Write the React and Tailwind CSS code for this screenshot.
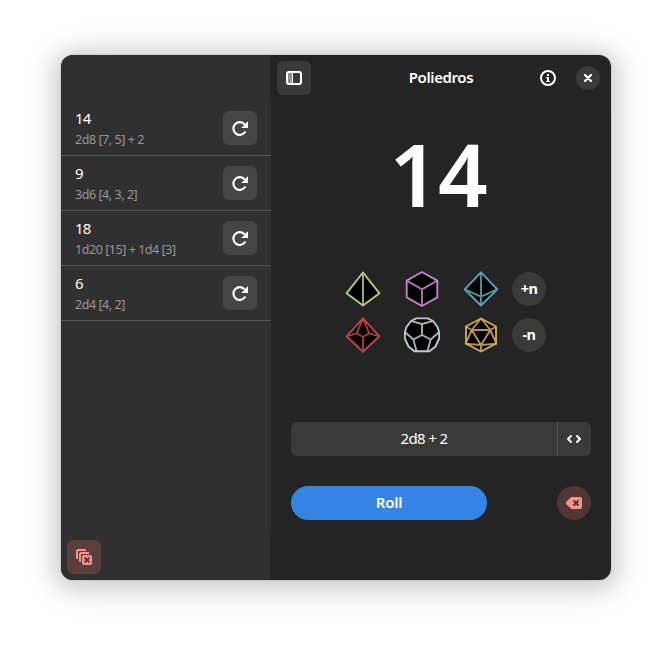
import React from "react";

const history = [
  { total: "14", detail: "2d8 [7, 5] + 2" },
  { total: "9", detail: "3d6 [4, 3, 2]" },
  { total: "18", detail: "1d20 [15] + 1d4 [3]" },
  { total: "6", detail: "2d4 [4, 2]" },
];

function RedoIcon() {
  return (
    <svg width="16" height="16" viewBox="0 0 16 16" fill="none">
      <path d="M13.4 11.6A6.4 6.4 0 1 1 13 4.8" stroke="#fff" strokeWidth="2.1" />
      <path d="M16 1.8V8H9.6V7.2L12 5.8L15 1.8Z" fill="#fff" />
    </svg>
  );
}

function SidebarIcon() {
  return (
    <svg width="16" height="14" viewBox="0 0 16 14" fill="none">
      <rect x="1.5" y="1" width="5" height="12" fill="#8f8f8f" />
      <path d="M6.5 1V13" stroke="#fff" />
      <rect x="1" y="1" width="14" height="12" rx="2" stroke="#fff" strokeWidth="2" />
    </svg>
  );
}

function InfoIcon() {
  return (
    <svg width="16" height="16" viewBox="0 0 16 16" fill="none">
      <circle cx="8" cy="8" r="7" stroke="#fff" strokeWidth="2" />
      <path d="M7 4H9V6H7ZM6 7H9V11H10V12H6V11H7V8H6Z" fill="#fff" />
    </svg>
  );
}

function CloseIcon() {
  return (
    <svg width="16" height="16" viewBox="0 0 16 16" fill="none">
      <path d="M5 5L11 11M11 5L5 11" stroke="#fff" strokeWidth="2.2" strokeLinecap="round" />
    </svg>
  );
}

function CodeIcon() {
  return (
    <svg width="16" height="16" viewBox="0 0 16 16" fill="none" stroke="#fff" strokeWidth="2" strokeLinecap="round" strokeLinejoin="round">
      <path d="M5 5L2 8L5 11M11 5L14 8L11 11" />
    </svg>
  );
}

function BackspaceIcon() {
  return (
    <svg width="16" height="12" viewBox="0 0 16 12">
      <path d="M5.5 0H14A2 2 0 0 1 16 2V10A2 2 0 0 1 14 12H5.5L1 8Q-1 6 1 4Z" fill="#ff938c" />
      <path d="M7.5 3.5L12.5 8.5M12.5 3.5L7.5 8.5" stroke="#503634" strokeWidth="2.1" />
    </svg>
  );
}

function ClearAllIcon() {
  return (
    <svg width="16" height="16" viewBox="0 0 16 16" fill="none" stroke="#ff938c" strokeWidth="2">
      <path d="M1 10V2.5Q1 1 2.5 1H10" />
      <path d="M4 13V5.5Q4 4 5.5 4H13" />
      <rect x="6" y="6" width="10" height="10" rx="2" fill="#ff938c" stroke="none" />
      <path d="M8.5 8.5L13.5 13.5M13.5 8.5L8.5 13.5" stroke="#5a3f3d" strokeWidth="2.1" />
    </svg>
  );
}

const dice = [
  [
    { name: "d4", color: "#b3cc80", outline: "M18 1.5L1.5 22.3L18 34.5L34.5 22.3Z", inner: "M18 1.5V34.5" },
    { name: "d6", color: "#c183c1", outline: "M18 1L33.3 9.7V26.4L18 35L2.7 26.4V9.7Z", inner: "M2.7 9.7L18 18.3L33.3 9.7M18 18.3V35" },
    { name: "d8", color: "#54a8b8", outline: "M18 1.3L34.3 18.3L18 34.5L1.7 18.3Z", inner: "M18 1.3V34.5M1.7 18.3L18 25.7L34.3 18.3" },
  ],
  [
    { name: "d10", color: "#bd4545", outline: "M18 1.3L34.4 19.3L18 34.7L1.6 19.3Z", inner: "M18 1.3L11.7 16.3L18 20L24.3 16.3L18 1.3M1.6 19.3L11.7 16.3M34.4 19.3L24.3 16.3M18 20V34.7" },
    { name: "d12", color: "#b5cdd3", outline: "M12.3 1.4H23.7L29 4L33.5 10L35.1 15V21.5L31.5 29.5L25.5 34.3H10.5L4.5 29.5L.9 21.5V15L2.5 10L7 4Z", inner: "M7.4 4.2L18 7L28.6 4.2M18 7V18L26.7 22.5L23.5 34M18 18L9.3 22.5L12.5 34M9.3 22.5L1.2 15.2M26.7 22.5L34.8 15.2" },
    { name: "d20", color: "#d1a75e", outline: "M18 1.5L33 9.5V26.7L18 34.5L3 26.7V9.5Z", inner: "M8.7 13H27.3L18 28ZM18 1.3L8.7 13L2.7 9.5M18 1.3L27.3 13L33.3 9.5M8.7 13L2.7 26.7L18 28L33.3 26.7L27.3 13M18 28V34.7" },
  ],
];

function Die({ die }) {
  return (
    <svg width="36" height="36" viewBox="0 0 36 36" fill="none" stroke={die.color} strokeWidth="1.9" strokeLinejoin="round">
      <path d={die.outline} fill="#000" />
      <path d={die.inner} strokeOpacity="0.88" />
    </svg>
  );
}

export default function App() {
  return (
    <div className="h-[647px] w-[672px] overflow-hidden bg-white pl-[61px] pt-[55px] font-['Noto_Sans',sans-serif] text-white">
      <div className="flex h-[525px] w-[550px] overflow-hidden rounded-xl bg-[#242424] shadow-[0_3px_20px_8px_rgba(0,0,0,0.13),0_3px_44px_4px_rgba(0,0,0,0.09),0_0_0_1px_rgba(0,0,0,0.07)]">
        <aside className="flex w-[210px] shrink-0 flex-col bg-[#303030]">
          <div className="h-[46px] shrink-0 border-r border-[#252525]" />
          <div className="h-[432px] shrink-0">
            {history.map((item) => (
              <div key={item.total} className="flex h-[55px] items-center justify-between border-b border-[#535353] px-3.5">
                <div className="whitespace-nowrap pt-px">
                  <div className="text-[15px] leading-[20px] tracking-[-0.9px]">{item.total}</div>
                  <div className="pt-[2px] text-[12.5px] leading-[20px] tracking-[-0.45px] text-[#989898]">{item.detail}</div>
                </div>
                <button className="flex size-[34px] items-center justify-center rounded-md bg-[#454545]">
                  <RedoIcon />
                </button>
              </div>
            ))}
          </div>
          <div className="flex flex-1 items-start border-r border-[#252525] pl-1.5 pt-[7px]">
            <button className="flex size-[34px] items-center justify-center rounded-md bg-[#5a3f3d]">
              <ClearAllIcon />
            </button>
          </div>
        </aside>

        <main className="flex w-[340px] flex-col">
          <header className="grid h-[46px] shrink-0 grid-cols-[100px_140px_100px] items-center">
            <button className="ml-1.5 flex size-[34px] items-center justify-center rounded-md bg-[#3a3a3a]">
              <SidebarIcon />
            </button>
            <h1 className="pb-0.5 text-center text-[15px] font-semibold leading-5 tracking-[-0.4px]">Poliedros</h1>
            <div className="flex items-center justify-end gap-5 pr-[11px]">
              <InfoIcon />
              <button className="flex size-6 items-center justify-center rounded-full bg-[#3a3a3a]">
                <CloseIcon />
              </button>
            </div>
          </header>

          <div className="flex h-[170px] shrink-0 items-start justify-center pr-[6px] pt-3 text-[87px] font-semibold leading-[120px] tracking-[-1px]">14</div>

          <div className="ml-[74px] flex flex-col gap-2.5">
            {dice.map((row, i) => (
              <div key={i} className="flex h-9 items-center">
                <div className="flex gap-[23px]">
                  {row.map((die) => (
                    <Die key={die.name} die={die} />
                  ))}
                </div>
                <button className="ml-[13px] flex size-[34px] items-center justify-center rounded-full bg-[#3a3a3a] pb-px text-[14.5px] font-bold tracking-[-0.6px]">
                  {i === 0 ? "+n" : "-n"}
                </button>
              </div>
            ))}
          </div>

          <div className="mx-5 mt-[69px] flex h-[34px] shrink-0 overflow-hidden rounded-md bg-[#3a3a3a]">
            <div className="flex-1 text-center text-[15px] leading-[33px] tracking-[-0.6px]">2d8 + 2</div>
            <button className="flex w-[34px] items-center justify-center border-l border-[#545454] pr-px">
              <CodeIcon />
            </button>
          </div>

          <div className="mx-5 mt-[30px] flex justify-between">
            <button className="flex h-[34px] w-[196px] items-center justify-center rounded-full bg-[#3584e4] pb-px text-[15px] font-semibold leading-[21px] tracking-[-0.2px]">Roll</button>
            <button className="flex size-[34px] items-center justify-center rounded-full bg-[#503634]">
              <BackspaceIcon />
            </button>
          </div>
        </main>
      </div>
    </div>
  );
}
